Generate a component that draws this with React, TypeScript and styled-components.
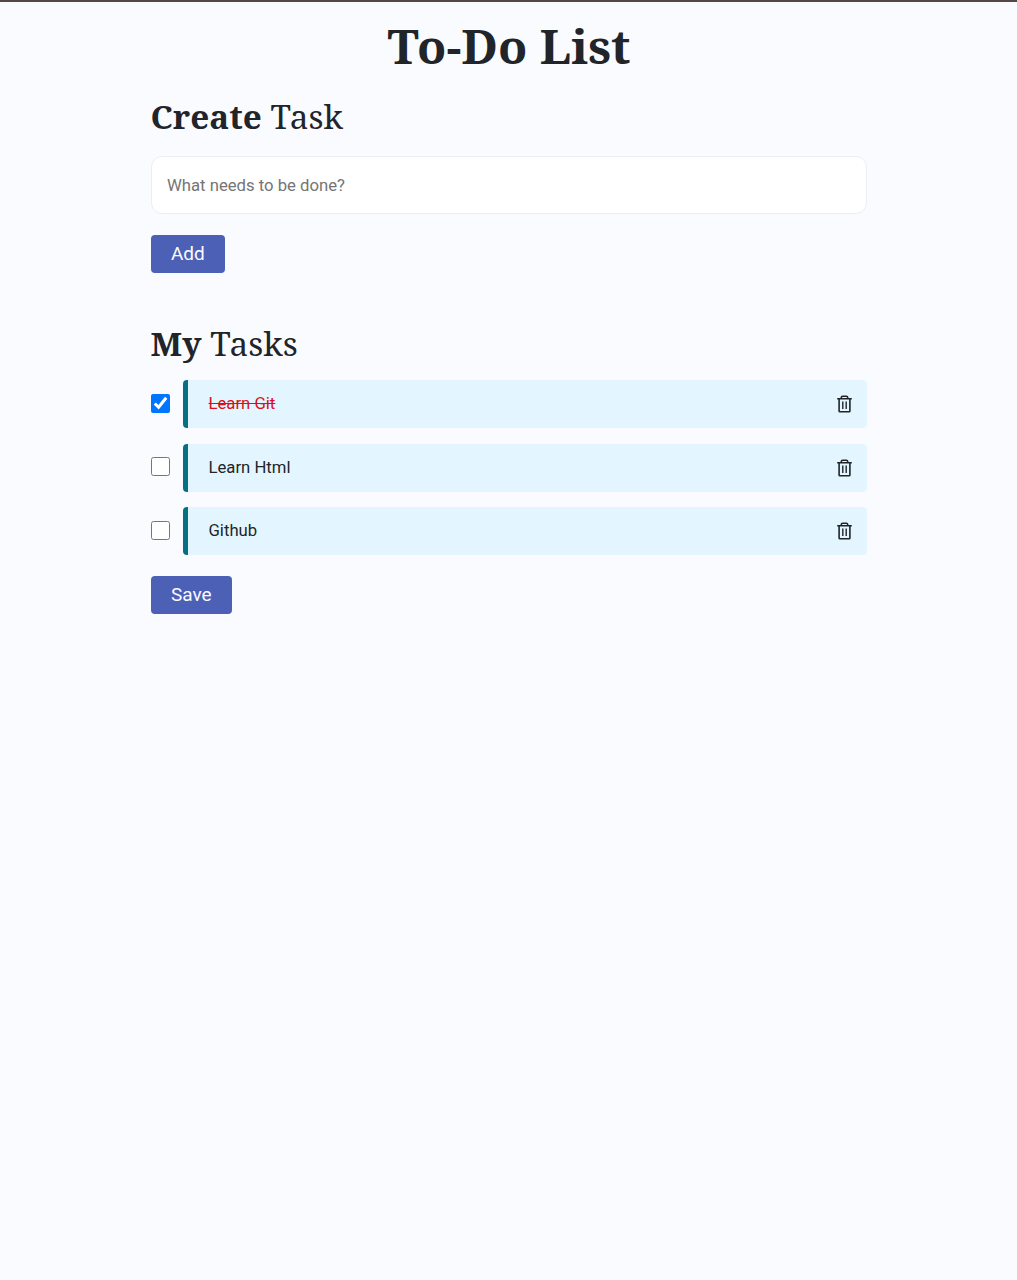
import React, { useState } from "react";
import styled, { createGlobalStyle } from "styled-components";

const GlobalStyle = createGlobalStyle`
  * { box-sizing: border-box; }
  body {
    margin: 0;
    min-height: 100vh;
    background: #fafbff;
    color: #212529;
    font-family: Roboto, sans-serif;
  }
`;

const Page = styled.div`
  min-height: 100vh;
  border-top: 2px solid #544846;
`;

const Container = styled.main`
  width: 716px;
  margin: 0 auto;
  padding-top: 15px;
  display: flex;
  flex-direction: column;
`;

const serif = `"Noto Serif", "DejaVu Serif Condensed", "DejaVu Serif", serif`;

const Title = styled.h1`
  margin: 0;
  padding-left: 1px;
  height: 58px;
  line-height: 58px;
  text-align: center;
  white-space: nowrap;
  font-family: ${serif};
  font-stretch: condensed;
  font-weight: 700;
  font-size: 47.9px;
`;

const Heading = styled.h2`
  margin: 0;
  height: 42px;
  line-height: 42px;
  white-space: nowrap;
  font-family: ${serif};
  font-stretch: condensed;
  font-weight: 400;
  font-size: 33.3px;
`;

const Section = styled.section<{ $top: number }>`
  margin-top: ${(p) => p.$top}px;
  display: flex;
  flex-direction: column;
  align-items: flex-start;
`;

const TaskInput = styled.input`
  width: 100%;
  height: 58px;
  margin: 19px 0 21px;
  padding: 0 15.5px;
  border: 1px solid #eceef2;
  border-radius: 11px;
  background: #fff;
  outline: none;
  font: 400 16.7px Roboto, sans-serif;
  &::placeholder { color: #757575; opacity: 1; }
`;

const Button = styled.button<{ $width: number }>`
  width: ${(p) => p.$width}px;
  height: 38px;
  padding: 0 0 1px;
  border: 0;
  border-radius: 4px;
  background: #4c61b6;
  color: #fafbff;
  font: 400 19px Roboto, sans-serif;
`;

const List = styled.ul`
  width: 100%;
  margin: 16.4px 0 20.4px;
  padding: 0;
  list-style: none;
  display: flex;
  flex-direction: column;
  gap: 15.4px;
`;

const Row = styled.li`
  display: flex;
  align-items: center;
  gap: 13px;
`;

const Checkbox = styled.input`
  width: 19px;
  height: 19px;
  margin: 0 0 2px;
  flex: none;
`;

const Card = styled.div`
  flex: 1;
  height: 48px;
  padding: 0 15px 0 21px;
  display: flex;
  align-items: center;
  justify-content: space-between;
  border-left: 5px solid #076f83;
  border-radius: 4px;
  background: #e3f6ff;
`;

const Label = styled.span<{ $done: boolean }>`
  font-size: 16.7px;
  line-height: 24px;
  color: ${(p) => (p.$done ? "#d9101c" : "#212529")};
  text-decoration: ${(p) => (p.$done ? "line-through" : "none")};
`;

const DeleteButton = styled.button`
  display: flex;
  padding: 0;
  border: 0;
  background: none;
  color: #212529;
`;

const TrashIcon = () => (
  <svg width="15" height="18" viewBox="0 0 15 18" fill="none" stroke="currentColor" strokeWidth="1.6">
    <path d="M0.2 3.8H14.8M2.1 3.8V15.9Q2.1 16.7 2.9 16.7H12.1Q12.9 16.7 12.9 15.9V3.8M4.2 3.5V2.9Q4.2 1.3 5.8 1.3H9.2Q10.8 1.3 10.8 2.9V3.5" />
    <path d="M5.8 6.6V14M9.2 6.6V14" strokeWidth="1.4" />
  </svg>
);

const initialTasks = [
  { name: "Learn Git", done: true },
  { name: "Learn Html", done: false },
  { name: "Github", done: false },
];

export default function App() {
  const [tasks, setTasks] = useState(initialTasks);
  const toggle = (index: number) =>
    setTasks(tasks.map((t, i) => (i === index ? { ...t, done: !t.done } : t)));

  return (
    <Page>
      <GlobalStyle />
      <Container>
        <Title>To-Do List</Title>
        <Section $top={20}>
          <Heading><b>Create</b> Task</Heading>
          <TaskInput placeholder="What needs to be done?" />
          <Button $width={74.6}>Add</Button>
        </Section>
        <Section $top={49}>
          <Heading><b>My</b> Tasks</Heading>
          <List>
            {tasks.map((task, i) => (
              <Row key={task.name}>
                <Checkbox type="checkbox" checked={task.done} onChange={() => toggle(i)} />
                <Card>
                  <Label $done={task.done}>{task.name}</Label>
                  <DeleteButton aria-label="Delete"><TrashIcon /></DeleteButton>
                </Card>
              </Row>
            ))}
          </List>
          <Button $width={81.6}>Save</Button>
        </Section>
      </Container>
    </Page>
  );
}
